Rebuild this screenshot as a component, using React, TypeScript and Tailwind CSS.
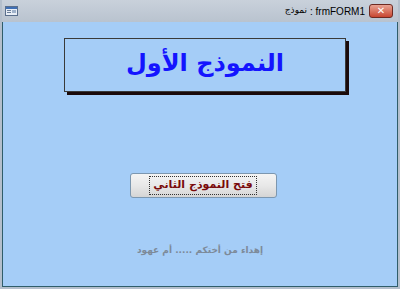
import React from "react";

const arabic = { fontFamily: '"DejaVu Sans", "Liberation Sans", sans-serif' };

function WindowIcon() {
  return (
    <svg width="13" height="10" viewBox="0 0 13 10">
      <rect x="0.5" y="0.5" width="12" height="9" fill="#e8eef6" stroke="#5a6f8c" />
      <rect x="1" y="1" width="11" height="2" fill="#3f6fb5" />
      <rect x="2" y="4" width="4" height="1" fill="#6b7f99" />
      <rect x="2" y="6" width="4" height="1" fill="#6b7f99" />
      <rect x="7" y="4" width="4" height="3" fill="#9fb2ca" />
    </svg>
  );
}

export default function App() {
  return (
    <div className="w-[400px] h-[289px] bg-[#b4bfcc] flex flex-col px-[2px] pb-[2px] overflow-hidden">
      <div className="h-[22px] flex items-center justify-between pl-[3px] pr-[5px] bg-gradient-to-b from-[#c9d1db] to-[#b9c3cf]">
        <WindowIcon />
        <div className="flex items-center gap-[4px]">
          <div className="flex items-center gap-[3px] text-[10px] text-black" style={{ fontFamily: '"Liberation Sans", "DejaVu Sans", sans-serif' }}>
            <span dir="rtl" className="text-[9px]" style={arabic}>نموذج</span>
            <span>: frmFORM1</span>
          </div>
          <div className="w-[24px] h-[14px] rounded-[3px] border border-[#6e2a22] bg-gradient-to-b from-[#e8a293] to-[#c7442f] flex items-center justify-center">
            <span className="text-white text-[10px] font-bold leading-none" style={{ fontFamily: '"DejaVu Sans", sans-serif' }}>✕</span>
          </div>
        </div>
      </div>
      <div className="flex-1 border-l border-r border-b border-[#2f5d6a] bg-[#a5cdf7] flex flex-col items-center">
        <div className="mt-[16px] ml-[10px] w-[282px] h-[54px] border border-[#3a3a3a] shadow-[3px_3px_0_#1a0a0a] flex items-center justify-center">
          <span className="text-[24px] font-bold text-[#1414ff] leading-none pb-[4px]" dir="rtl" style={arabic}>النموذج الأول</span>
        </div>
        <button className="mt-[81px] ml-[6px] w-[147px] h-[25px] rounded-[3px] border border-[#7c97b0] bg-gradient-to-b from-[#f4f4f4] via-[#e8e8e8] to-[#d5d5d5] flex items-center justify-center">
          <span className="px-[3px] h-[19px] flex items-center border border-dotted border-[#333] text-[11px] font-bold text-[#7a0a0a]" dir="rtl" style={arabic}>فتح النموذج الثاني</span>
        </button>
        <div className="mt-[46px] text-[9px] font-bold text-[#7d8a99]" dir="rtl" style={arabic}>
          إهداء من أختكم ..... أم عهود
        </div>
      </div>
    </div>
  );
}
